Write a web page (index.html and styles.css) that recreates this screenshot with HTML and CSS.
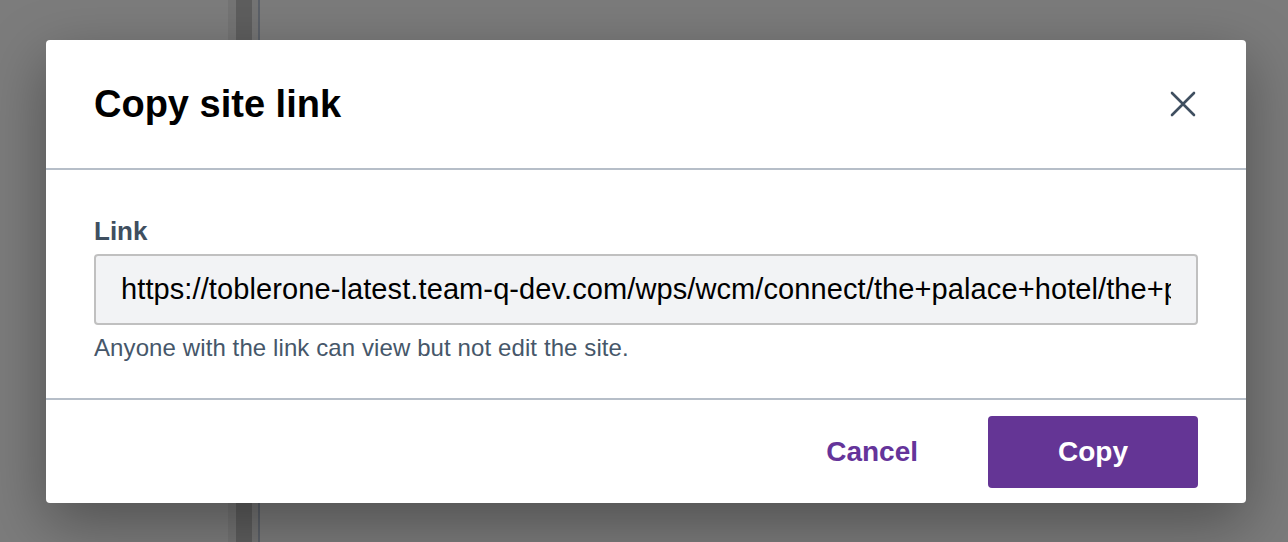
FILE: index.html
```html
<!DOCTYPE html>
<html lang="en">
<head>
<meta charset="utf-8">
<title>Copy site link</title>
<link rel="stylesheet" href="styles.css">
</head>
<body>
<div class="backdrop">
  <div class="modal" role="dialog" aria-labelledby="dlg-title">
    <header class="modal-header">
      <h1 id="dlg-title" class="modal-title">Copy site link</h1>
      <button class="close-btn" aria-label="Close">
        <svg width="26" height="26" viewBox="0 0 26 26" aria-hidden="true"><path d="M2 2 L24 24 M24 2 L2 24" stroke="#3f4f60" stroke-width="2.6" stroke-linecap="round" fill="none"/></svg>
      </button>
    </header>
    <section class="modal-body">
      <label class="field-label" for="link">Link</label>
      <div class="field-input" id="link"><div class="field-value">https://toblerone-latest.team-q-dev.com/wps/wcm/connect/the+palace+hotel/the+palace+hotel/home</div></div>
      <p class="field-help">Anyone with the link can view but not edit the site.</p>
    </section>
    <footer class="modal-footer">
      <button class="btn-text">Cancel</button>
      <button class="btn-primary">Copy</button>
    </footer>
  </div>
</div>
</body>
</html>
```
FILE: styles.css
```css
* { box-sizing: border-box; }
html, body { margin: 0; padding: 0; }
body {
  width: 1288px;
  height: 542px;
  overflow: hidden;
  font-family: "Liberation Sans", Arial, sans-serif;
  background: #7b7b7b;
}
.backdrop {
  width: 1288px;
  height: 542px;
  padding: 40px 42px 0 46px;
  background: linear-gradient(90deg, #7c7c7c 0, #7c7c7c 228px, #747474 228px, #747474 236px, #5e5e5e 236px, #5e5e5e 252px, #747474 252px, #747474 258px, #5b6068 258px, #5b6068 260px, #7b7b7b 260px, #7b7b7b 100%);
}
.modal {
  width: 1200px;
  height: 463px;
  background: #fff;
  border-radius: 4px;
  box-shadow: 0 20px 60px rgba(0,0,0,0.35);
  display: flex;
  flex-direction: column;
}
.modal-header {
  height: 130px;
  display: flex;
  align-items: center;
  justify-content: space-between;
  padding: 0 48px 0 48px;
  border-bottom: 2px solid #b6bec8;
}
.modal-title {
  margin: 0;
  font-size: 38px;
  font-weight: 700;
  color: #000;
  line-height: 44px;
}
.close-btn {
  background: none;
  border: 0;
  padding: 0;
  width: 26px;
  height: 26px;
  margin-right: 2px;
  cursor: pointer;
  display: flex;
}
.modal-body {
  height: 230px;
  padding: 46px 48px 0 48px;
  border-bottom: 2px solid #b6bec8;
}
.field-label {
  display: block;
  font-size: 26px;
  font-weight: 700;
  color: #3f4f60;
  line-height: 30px;
  margin-bottom: 8px;
}
.field-input {
  height: 71px;
  border: 2px solid #c0c0c0;
  border-radius: 4px;
  background: #f2f3f5;
  padding: 0 25px 0 25px;
}
.field-value {
  font-size: 29px;
  letter-spacing: 0.1px;
  line-height: 67px;
  color: #000;
  white-space: nowrap;
  overflow: hidden;
}
.field-help {
  margin: 11px 0 0 0;
  font-size: 24px;
  letter-spacing: 0.1px;
  line-height: 24px;
  color: #46576a;
}
.modal-footer {
  flex: 1;
  display: flex;
  align-items: flex-start;
  justify-content: flex-end;
  padding: 16px 48px 0 0;
  gap: 70px;
}
.btn-text {
  background: none;
  border: 0;
  font-family: inherit;
  font-size: 28px;
  font-weight: 700;
  color: #65349a;
  height: 72px;
  padding: 0;
  cursor: pointer;
}
.btn-primary {
  width: 210px;
  height: 72px;
  background: #643595;
  color: #fff;
  border: 0;
  border-radius: 4px;
  font-family: inherit;
  font-size: 28px;
  font-weight: 700;
  cursor: pointer;
}
```
